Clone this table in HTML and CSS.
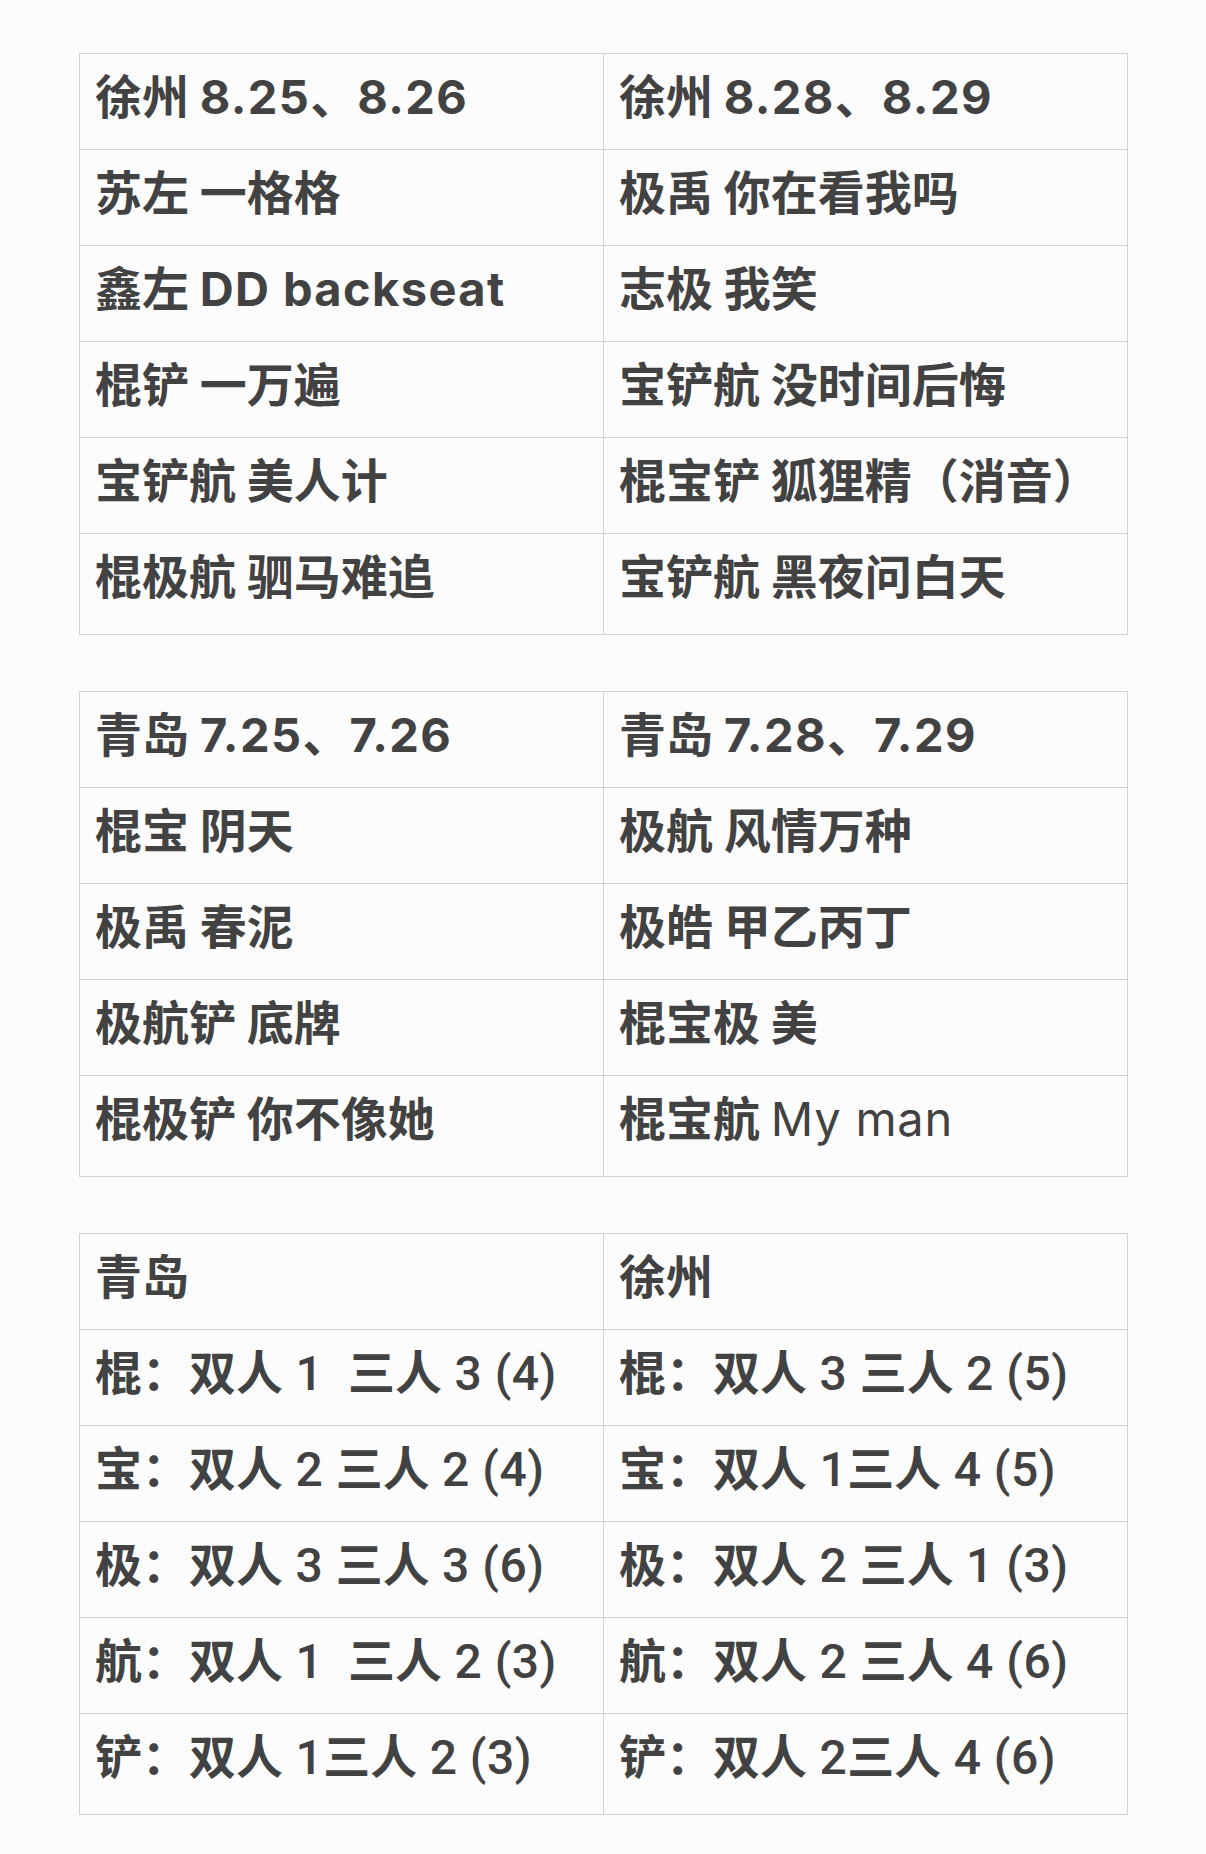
FILE: index.html
```html
<!DOCTYPE html>
<html lang="zh-CN">
<head>
<meta charset="utf-8">
<title>巡演歌单</title>
<link rel="stylesheet" href="styles.css">
</head>
<body>
<main class="page">
  <table class="grid">
    <tr><td><div class="cell">徐州 <span class="lat">8.25</span>、<span class="lat">8.26</span></div></td><td><div class="cell">徐州 <span class="lat">8.28</span>、<span class="lat">8.29</span></div></td></tr>
    <tr><td><div class="cell">苏左 一格格</div></td><td><div class="cell">极禹 你在看我吗</div></td></tr>
    <tr><td><div class="cell">鑫左 <span class="lat">DD backseat</span></div></td><td><div class="cell">志极 我笑</div></td></tr>
    <tr><td><div class="cell">棍铲 一万遍</div></td><td><div class="cell">宝铲航 没时间后悔</div></td></tr>
    <tr><td><div class="cell">宝铲航 美人计</div></td><td><div class="cell">棍宝铲 狐狸精（消音）</div></td></tr>
    <tr class="last"><td><div class="cell">棍极航 驷马难追</div></td><td><div class="cell">宝铲航 黑夜问白天</div></td></tr>
  </table>

  <table class="grid">
    <tr><td><div class="cell">青岛<span class="lat gap">7.25</span>、<span class="lat">7.26</span></div></td><td><div class="cell">青岛<span class="lat gap">7.28</span>、<span class="lat">7.29</span></div></td></tr>
    <tr><td><div class="cell">棍宝 阴天</div></td><td><div class="cell">极航 风情万种</div></td></tr>
    <tr><td><div class="cell">极禹 春泥</div></td><td><div class="cell">极皓 甲乙丙丁</div></td></tr>
    <tr><td><div class="cell">极航铲 底牌</div></td><td><div class="cell">棍宝极 美</div></td></tr>
    <tr class="last"><td><div class="cell">棍极铲 你不像她</div></td><td><div class="cell">棍宝航 <span class="lat light">My man</span></div></td></tr>
  </table>

  <table class="grid stats">
    <tr><td><div class="cell">青岛</div></td><td><div class="cell">徐州</div></td></tr>
    <tr><td><div class="cell">棍：双人<span class="n"> 1&nbsp; </span>三人<span class="n"> 3 (4)</span></div></td><td><div class="cell">棍：双人<span class="n"> 3 </span>三人<span class="n"> 2 (5)</span></div></td></tr>
    <tr><td><div class="cell">宝：双人<span class="n"> 2 </span>三人<span class="n"> 2 (4)</span></div></td><td><div class="cell">宝：双人<span class="n"> 1</span>三人<span class="n"> 4 (5)</span></div></td></tr>
    <tr><td><div class="cell">极：双人<span class="n"> 3 </span>三人<span class="n"> 3 (6)</span></div></td><td><div class="cell">极：双人<span class="n"> 2 </span>三人<span class="n"> 1 (3)</span></div></td></tr>
    <tr><td><div class="cell">航：双人<span class="n"> 1&nbsp; </span>三人<span class="n"> 2 (3)</span></div></td><td><div class="cell">航：双人<span class="n"> 2 </span>三人<span class="n"> 4 (6)</span></div></td></tr>
    <tr class="last"><td><div class="cell">铲：双人<span class="n"> 1</span>三人<span class="n"> 2 (3)</span></div></td><td><div class="cell">铲：双人<span class="n"> 2</span>三人<span class="n"> 4 (6)</span></div></td></tr>
  </table>
</main>
</body>
</html>
```

FILE: styles.css
```css
html, body {
  margin: 0;
  padding: 0;
  background: #fcfcfc;
}

.page {
  padding: 53px 0 0 79px;
  display: flex;
  flex-direction: column;
  gap: 56px;
}

.grid {
  border-collapse: collapse;
  table-layout: fixed;
  width: 1049px;
  font-family: "Noto Sans CJK SC", sans-serif;
  font-size: 47px;
  font-weight: 700;
  color: #424242;
}

.grid td {
  border: 1px solid #d3d3d3;
  padding: 5px 14px 20px 15px;
  white-space: nowrap;
  overflow: hidden;
}

.cell {
  height: 70px;
  line-height: 70px;
}

.grid tr.last td {
  padding-bottom: 25px;
}

.lat {
  font-family: "Inter", "Noto Sans CJK SC", sans-serif;
  letter-spacing: 1.4px;
}

.gap {
  display: inline-block;
  padding-left: 11px;
}

.light {
  font-weight: 400;
  letter-spacing: 0.8px;
}

.n {
  font-family: "Roboto", "Noto Sans CJK SC", sans-serif;
  font-weight: 500;
  font-size: 48px;
  letter-spacing: 0.5px;
}
```
